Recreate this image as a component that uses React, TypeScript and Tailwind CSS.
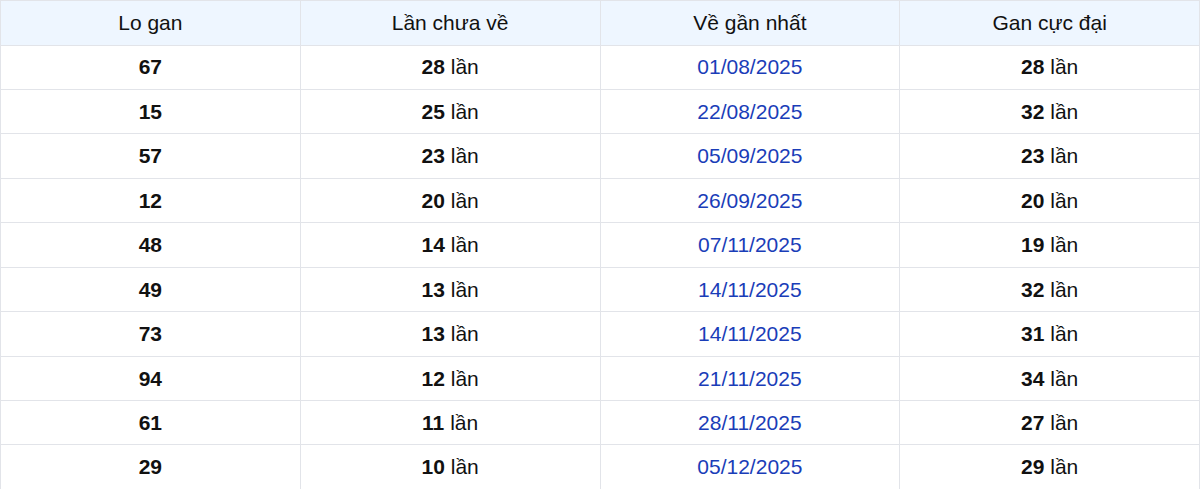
import React from "react";

const rows: [string, string, string, string][] = [
  ["67", "28", "01/08/2025", "28"],
  ["15", "25", "22/08/2025", "32"],
  ["57", "23", "05/09/2025", "23"],
  ["12", "20", "26/09/2025", "20"],
  ["48", "14", "07/11/2025", "19"],
  ["49", "13", "14/11/2025", "32"],
  ["73", "13", "14/11/2025", "31"],
  ["94", "12", "21/11/2025", "34"],
  ["61", "11", "28/11/2025", "27"],
  ["29", "10", "05/12/2025", "29"],
];

export default function App() {
  return (
    <div className="w-[1200px] bg-white" style={{ fontFamily: '"Liberation Sans", Arial, sans-serif' }}>
      <table className="w-full table-fixed border-collapse border border-[#e2e4e9] text-[21px] text-[#111]">
        <thead>
          <tr className="h-[44.5px] bg-[#eef6ff]">
            <th className="border border-[#e2e4e9] font-normal text-center">Lo gan</th>
            <th className="border border-[#e2e4e9] font-normal text-center">Lần chưa về</th>
            <th className="border border-[#e2e4e9] font-normal text-center">Về gần nhất</th>
            <th className="border border-[#e2e4e9] font-normal text-center">Gan cực đại</th>
          </tr>
        </thead>
        <tbody>
          {rows.map((r, i) => (
            <tr key={i} className="h-[44.44px]">
              <td className="border border-[#e2e4e9] text-center font-bold">{r[0]}</td>
              <td className="border border-[#e2e4e9] text-center">
                <span className="font-bold">{r[1]}</span> lần
              </td>
              <td className="border border-[#e2e4e9] text-center text-[#1a3db8]">{r[2]}</td>
              <td className="border border-[#e2e4e9] text-center">
                <span className="font-bold">{r[3]}</span> lần
              </td>
            </tr>
          ))}
        </tbody>
      </table>
    </div>
  );
}
